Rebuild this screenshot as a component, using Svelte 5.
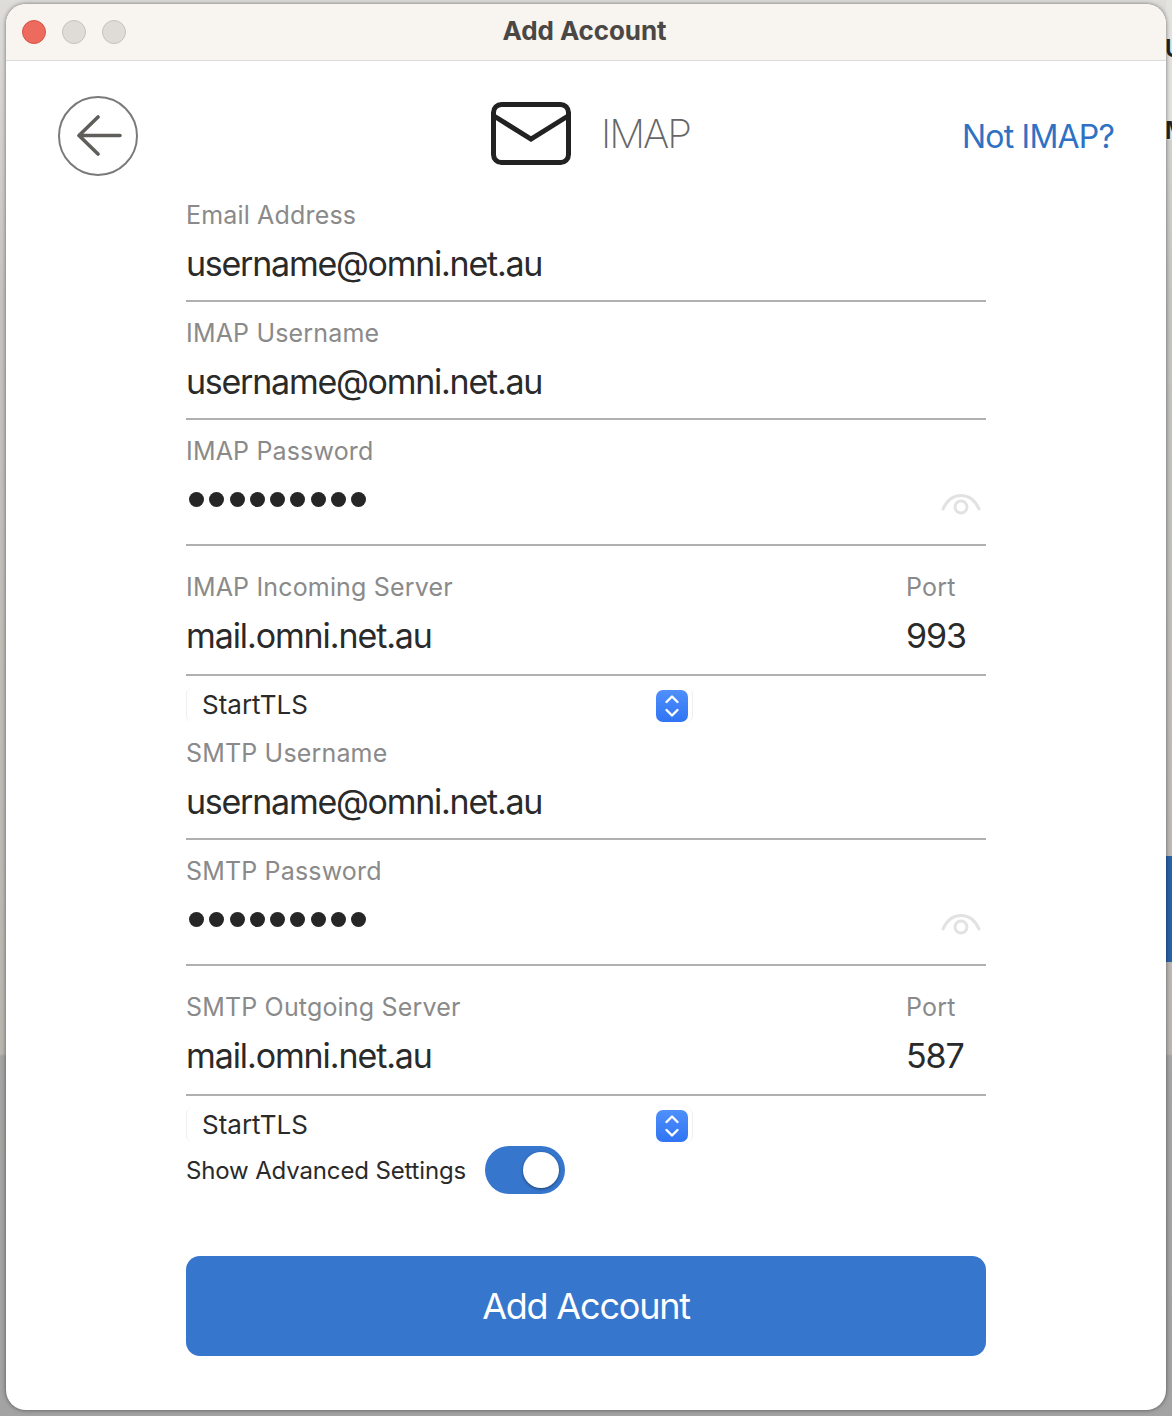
<script>
    const dots = Array(9).fill(0);
</script>

<div class="desktop">
    <div class="side"></div>
    <span class="behind u">U</span>
    <span class="behind m">M</span>
    <div class="strip-blue"></div>

    <div class="window">
        <div class="titlebar">
            <div class="lights">
                <span class="light red"></span>
                <span class="light"></span>
                <span class="light"></span>
            </div>
            <div class="title">Add Account</div>
        </div>

        <div class="header">
            <button class="back" aria-label="Back">
                <svg width="46" height="42" viewBox="0 0 46 42">
                    <path d="M3 20.5H44M22 2L3 20.5L22 39" fill="none" stroke="#5f5e5a" stroke-width="3.6" stroke-linecap="round" stroke-linejoin="round"/>
                </svg>
            </button>
            <div class="protocol">
                <svg width="80" height="63" viewBox="0 0 80 63">
                    <rect x="2.5" y="2.5" width="75" height="58" rx="8" fill="none" stroke="#222" stroke-width="5"/>
                    <path d="M3 14L40 37L77 14" fill="none" stroke="#222" stroke-width="5"/>
                </svg>
                <span class="protocol-name">IMAP</span>
            </div>
            <span class="not-imap">Not IMAP?</span>
        </div>

        <div class="form">
            <div class="field">
                <div class="label">Email Address</div>
                <div class="value email">username@omni.net.au</div>
            </div>
            <div class="field">
                <div class="label">IMAP Username</div>
                <div class="value email">username@omni.net.au</div>
            </div>
            <div class="field">
                <div class="label">IMAP Password</div>
                <div class="secret">
                    <div class="dots">
                        {#each dots as _}<span class="dot"></span>{/each}
                    </div>
                    <svg class="eye" width="40" height="24" viewBox="0 0 40 24">
                        <path d="M2 17C10 -1 30 -1 38 17" fill="none" stroke="#e2e2e2" stroke-width="3" stroke-linecap="round"/>
                        <circle cx="20" cy="15" r="6" fill="none" stroke="#e2e2e2" stroke-width="3"/>
                    </svg>
                </div>
            </div>
            <div class="field server">
                <div>
                    <div class="label">IMAP Incoming Server</div>
                    <div class="value">mail.omni.net.au</div>
                </div>
                <div>
                    <div class="label">Port</div>
                    <div class="value">993</div>
                </div>
            </div>
            <div class="select">
                <span>StartTLS</span>
                <span class="stepper">
                    <svg width="16" height="26" viewBox="0 0 16 26">
                        <path d="M2.5 9L8 3.5L13.500 9M2.5 17L8 22.500L13.500 17" fill="none" stroke="#fff" stroke-width="2.400" stroke-linecap="round" stroke-linejoin="round"/>
                    </svg>
                </span>
            </div>
            <div class="field">
                <div class="label">SMTP Username</div>
                <div class="value email">username@omni.net.au</div>
            </div>
            <div class="field">
                <div class="label">SMTP Password</div>
                <div class="secret">
                    <div class="dots">
                        {#each dots as _}<span class="dot"></span>{/each}
                    </div>
                    <svg class="eye" width="40" height="24" viewBox="0 0 40 24">
                        <path d="M2 17C10 -1 30 -1 38 17" fill="none" stroke="#e2e2e2" stroke-width="3" stroke-linecap="round"/>
                        <circle cx="20" cy="15" r="6" fill="none" stroke="#e2e2e2" stroke-width="3"/>
                    </svg>
                </div>
            </div>
            <div class="field server">
                <div>
                    <div class="label">SMTP Outgoing Server</div>
                    <div class="value">mail.omni.net.au</div>
                </div>
                <div>
                    <div class="label">Port</div>
                    <div class="value">587</div>
                </div>
            </div>
            <div class="select">
                <span>StartTLS</span>
                <span class="stepper">
                    <svg width="16" height="26" viewBox="0 0 16 26">
                        <path d="M2.5 9L8 3.5L13.500 9M2.5 17L8 22.500L13.500 17" fill="none" stroke="#fff" stroke-width="2.400" stroke-linecap="round" stroke-linejoin="round"/>
                    </svg>
                </span>
            </div>
            <div class="advanced">
                <span>Show Advanced Settings</span>
                <span class="toggle"><span class="knob"></span></span>
            </div>
            <button class="submit">Add Account</button>
        </div>
    </div>
</div>

<style>
    :global(body) {
        margin: 0;
    }
    .desktop {
        position: relative;
        width: 1172px;
        height: 1416px;
        padding: 4px 6px 6px;
        box-sizing: border-box;
        overflow: hidden;
        font-family: Inter, "Liberation Sans", sans-serif;
        background: linear-gradient(180deg, #dfddda 0, #c6c4c0 300px, #b9b6b1 1054px, #a5a5a4 1056px, #a3a3a3 1416px);
    }
    .side {
        position: absolute;
        left: 1166px;
        top: 0;
        width: 6px;
        height: 140px;
        background: #e4e2df;
    }
    .behind {
        position: absolute;
        left: 1165px;
        font-size: 24px;
        font-weight: 600;
        color: #222;
    }
    .u {
        top: 34px;
    }
    .m {
        top: 116px;
    }
    .strip-blue {
        position: absolute;
        left: 1166px;
        top: 856px;
        width: 6px;
        height: 106px;
        background: #2a62a8;
    }
    .window {
        position: relative;
        height: 1406px;
        background: #fff;
        border-radius: 20px;
        overflow: hidden;
        box-shadow: 0 0 4px rgba(0, 0, 0, 0.5);
    }
    .titlebar {
        position: relative;
        display: flex;
        align-items: center;
        justify-content: center;
        height: 57px;
        box-sizing: border-box;
        padding: 0 3px 3px 0;
        background: #f8f4ef;
        border-bottom: 1px solid #dddbd9;
    }
    .lights {
        position: absolute;
        left: 16px;
        top: 16px;
        display: flex;
        gap: 16px;
    }
    .light {
        width: 24px;
        height: 24px;
        box-sizing: border-box;
        border-radius: 50%;
        background: #dfdbd6;
        border: 1px solid #c6c2bd;
    }
    .red {
        background: #ec6a5e;
        border-color: #d6544a;
    }
    .title {
        font-size: 26px;
        font-weight: 700;
        letter-spacing: -0.1px;
        color: #4a4745;
    }
    .header {
        display: flex;
        align-items: flex-start;
        height: 123px;
        padding: 35px 52px 0;
        box-sizing: border-box;
    }
    .back {
        display: flex;
        align-items: center;
        justify-content: center;
        width: 80px;
        height: 80px;
        padding: 0 0 0 2px;
        box-sizing: border-box;
        background: #fff;
        border: 2px solid #7a7a78;
        border-radius: 50%;
    }
    .protocol {
        display: flex;
        align-items: center;
        gap: 30px;
        margin: 6px 0 0 353px;
    }
    .protocol-name {
        font-size: 40px;
        font-weight: 200;
        letter-spacing: -2px;
        color: #666;
    }
    .not-imap {
        margin-left: auto;
        margin-top: 21px;
        font-size: 32px;
        letter-spacing: -0.8px;
        color: #2f72c4;
    }
    .form {
        width: 800px;
        margin-left: 180px;
    }
    .field {
        padding-top: 16px;
        border-bottom: 2px solid #b0b0b0;
    }
    .server {
        display: grid;
        grid-template-columns: 1fr 80px;
        padding-top: 26px;
    }
    .label {
        font-size: 25px;
        line-height: 30px;
        letter-spacing: 0.17px;
        color: #8a8a8a;
    }
    .value {
        margin-top: 12px;
        padding-bottom: 14px;
        font-size: 34px;
        line-height: 44px;
        letter-spacing: -1.1px;
        color: #2a2a2a;
    }
    .email {
        letter-spacing: -1.25px;
    }
    .server .value {
        padding-bottom: 16px;
    }
    .secret {
        display: flex;
        align-items: flex-start;
        justify-content: space-between;
        height: 66px;
        margin-top: 12px;
        padding-right: 5px;
    }
    .dots {
        display: flex;
        gap: 5.300px;
        padding: 14px 0 0 3px;
    }
    .dot {
        width: 15px;
        height: 15px;
        border-radius: 50%;
        background: #262626;
    }
    .eye {
        margin-top: 14px;
    }
    .select {
        display: flex;
        align-items: center;
        justify-content: space-between;
        width: 507px;
        height: 34px;
        margin-top: 12px;
        padding: 0 4px 0 15px;
        box-sizing: border-box;
        border-left: 1px solid #efefef;
        border-right: 1px solid #efefef;
        border-radius: 6px;
        font-size: 26px;
        color: #2a2a2a;
    }
    .select span:first-child {
        margin-top: -2px;
    }
    .stepper {
        display: flex;
        align-items: center;
        justify-content: center;
        width: 32px;
        height: 32px;
        margin-top: 1px;
        border-radius: 7px;
        background: linear-gradient(180deg, #4f90fb, #2f74f4);
    }
    .advanced {
        display: flex;
        align-items: center;
        gap: 19px;
        height: 48px;
        margin-top: 4px;
        font-size: 24px;
        letter-spacing: -0.15px;
        color: #2a2a2a;
    }
    .toggle {
        display: flex;
        align-items: center;
        justify-content: flex-end;
        width: 80px;
        height: 48px;
        padding-right: 6px;
        box-sizing: border-box;
        border-radius: 24px;
        background: #3676cc;
    }
    .knob {
        width: 36px;
        height: 36px;
        border-radius: 50%;
        background: #fff;
        box-shadow: 0 1px 3px rgba(0, 0, 0, 0.45);
    }
    .submit {
        display: block;
        width: 800px;
        height: 100px;
        margin-top: 62px;
        border: 0;
        border-radius: 14px;
        background: #3676cc;
        font-family: inherit;
        font-size: 36px;
        letter-spacing: -1.200px;
        color: #fff;
    }
</style>
